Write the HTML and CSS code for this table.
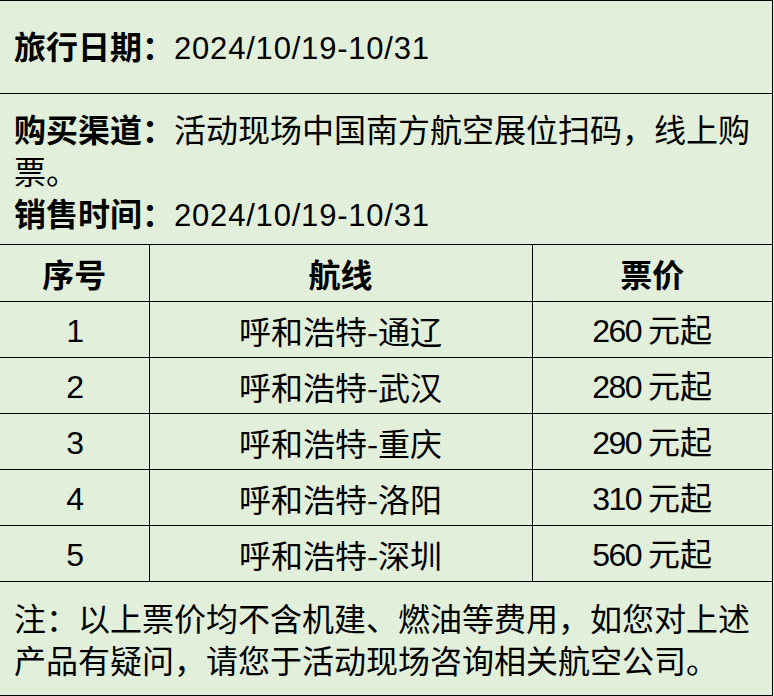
FILE: index.html
```html
<!DOCTYPE html>
<html lang="zh-CN">
<head>
<meta charset="utf-8">
<link rel="stylesheet" href="styles.css">
</head>
<body>
<div class="sheet">
  <div class="info info-date">
    <p class="line"><span class="label">旅行日期：</span><span class="num date">2024/10/19-10/31</span></p>
  </div>
  <div class="info info-buy">
    <p class="line"><span class="label">购买渠道：</span>活动现场中国南方航空展位扫码，线上购票。</p>
    <p class="line"><span class="label">销售时间：</span><span class="num date">2024/10/19-10/31</span></p>
  </div>
  <table class="routes">
    <colgroup>
      <col class="c1"><col class="c2"><col class="c3">
    </colgroup>
    <thead>
      <tr><th>序号</th><th>航线</th><th>票价</th></tr>
    </thead>
    <tbody>
      <tr><td><span class="num">1</span></td><td>呼和浩特-通辽</td><td><span class="num">260</span> 元起</td></tr>
      <tr><td><span class="num">2</span></td><td>呼和浩特-武汉</td><td><span class="num">280</span> 元起</td></tr>
      <tr><td><span class="num">3</span></td><td>呼和浩特-重庆</td><td><span class="num">290</span> 元起</td></tr>
      <tr><td><span class="num">4</span></td><td>呼和浩特-洛阳</td><td><span class="num">310</span> 元起</td></tr>
      <tr><td><span class="num">5</span></td><td>呼和浩特-深圳</td><td><span class="num">560</span> 元起</td></tr>
    </tbody>
  </table>
  <div class="info info-note">
    <p class="line">注：以上票价均不含机建、燃油等费用，如您对上述产品有疑问，请您于活动现场咨询相关航空公司。</p>
  </div>
</div>
</body>
</html>
```

FILE: styles.css
```css
html, body {
  margin: 0;
  padding: 0;
  background: #e2efda;
}
body {
  font-family: "Noto Sans CJK SC", "Noto Sans", sans-serif;
  font-size: 32px;
  color: #000;
}
.sheet {
  width: 772px;
  height: 694px;
  border-top: 1px solid #000;
  border-right: 1px solid #000;
  border-bottom: 1px solid #000;
  display: flex;
  flex-direction: column;
}
.info {
  padding: 0 14px;
  box-sizing: border-box;
}
.line {
  margin: 0;
  line-height: 42px;
}
.label {
  font-weight: bold;
}
.num {
  font-family: "Liberation Sans", "Noto Sans", sans-serif;
  font-size: 32px;
  letter-spacing: -1.6px;
}
.date {
  font-size: 31px;
  letter-spacing: 0.8px;
}
.info-date {
  height: 93px;
  display: flex;
  align-items: center;
  border-bottom: 1px solid #000;
}
.info-buy {
  height: 151px;
  padding-top: 13px;
  border-bottom: 1px solid #000;
}
.routes {
  width: 772px;
  border-collapse: collapse;
  table-layout: fixed;
}
.c1 { width: 149px; }
.c2 { width: 383px; }
.c3 { width: 240px; }
.routes th, .routes td {
  border: 1px solid #000;
  border-top: 0;
  text-align: center;
  padding: 0;
  line-height: 40px;
}
.routes th:first-child, .routes td:first-child {
  border-left: 0;
}
.routes th:last-child, .routes td:last-child {
  border-right: 0;
}
.routes th {
  height: 56px;
  font-weight: bold;
}
.routes td {
  height: 55px;
}
.info-note {
  flex: 1;
  padding-top: 14px;
}
```
